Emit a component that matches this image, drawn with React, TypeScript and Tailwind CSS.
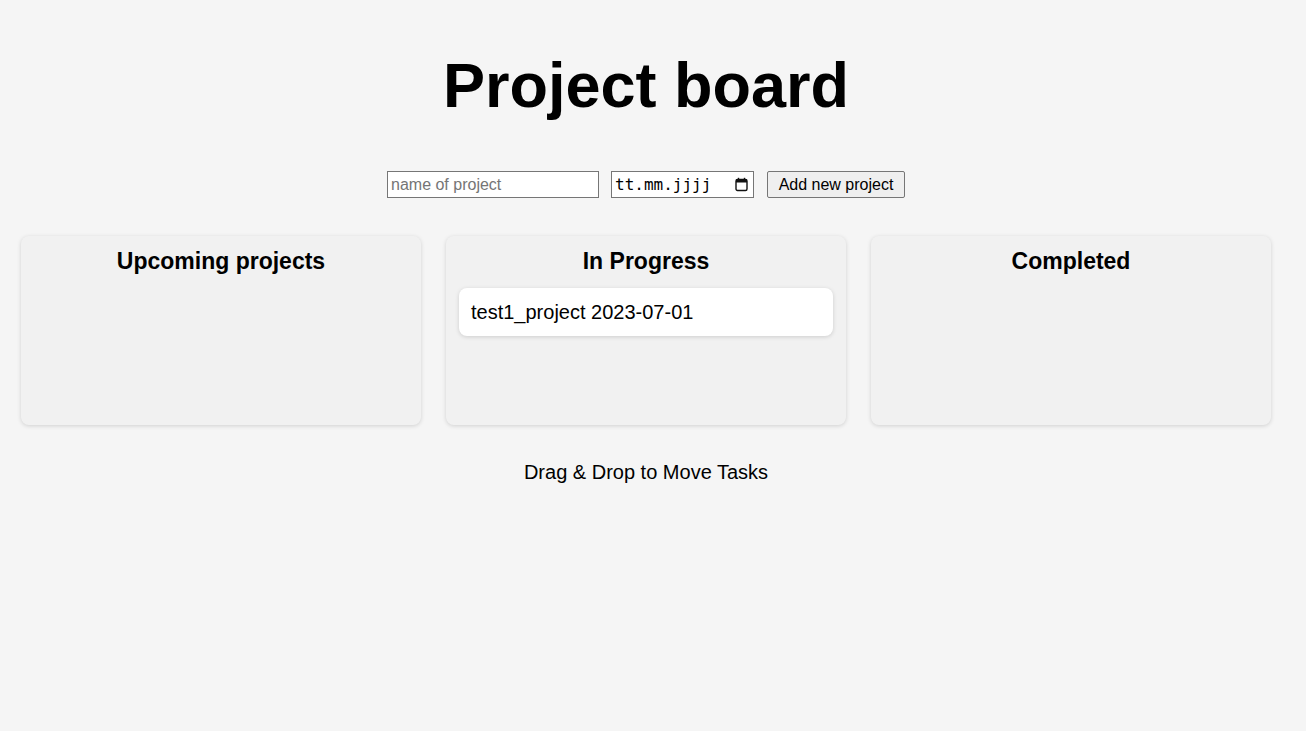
import React, { useState } from 'react';

interface Project {
  id: number;
  name: string;
  date: string;
  status: 'upcoming' | 'progress' | 'completed';
}

const columns: { key: Project['status']; title: string }[] = [
  { key: 'upcoming', title: 'Upcoming projects' },
  { key: 'progress', title: 'In Progress' },
  { key: 'completed', title: 'Completed' },
];

const CalendarIcon: React.FC = () => (
  <svg width="13" height="15" viewBox="0 0 13 15" fill="none" className="shrink-0">
    <rect x="1" y="2.5" width="11" height="11" rx="1.5" stroke="#111" strokeWidth="1.4" />
    <rect x="1" y="2.5" width="11" height="3" fill="#111" />
    <line x1="3.5" y1="0.8" x2="3.5" y2="3" stroke="#111" strokeWidth="1.4" />
    <line x1="9.5" y1="0.8" x2="9.5" y2="3" stroke="#111" strokeWidth="1.4" />
  </svg>
);

const App: React.FC = () => {
  const [projects] = useState<Project[]>([
    { id: 1, name: 'test1_project', date: '2023-07-01', status: 'progress' },
  ]);
  const [name, setName] = useState('');

  return (
    <div className="min-h-[731px] bg-[#f5f5f5] text-black font-['Liberation_Sans',Arial,sans-serif]">
      <div className="w-[1292px]">
        <h1 className="pt-[49px] text-center text-[63px] font-bold leading-[1.15]">Project board</h1>

        <div className="mt-[50px] flex justify-center items-center">
          <input
            type="text"
            value={name}
            onChange={(e) => setName(e.target.value)}
            placeholder="name of project"
            className="w-[212px] h-[27px] border border-[#767676] bg-white px-[3px] text-[16px] placeholder:text-[#757575] outline-none"
          />
          <div className="ml-[12px] w-[143px] h-[27px] border border-[#767676] bg-white flex items-center justify-between pl-[3px] pr-[5px]">
            <span className="font-['DejaVu_Sans_Mono','Liberation_Mono',monospace] text-[16px] text-black">tt.mm.jjjj</span>
            <CalendarIcon />
          </div>
          <button className="ml-[13px] w-[138px] h-[27px] border border-[#767676] rounded-[2px] bg-[#efefef] text-[16px] text-black">
            Add new project
          </button>
        </div>

        <div className="mt-[38px] flex justify-center gap-[25px]">
          {columns.map((col) => (
            <div
              key={col.key}
              className="w-[400px] h-[189px] rounded-[8px] bg-[#f1f1f1] shadow-[0_1px_4px_rgba(0,0,0,0.15)] px-[13px] pt-[12px]"
            >
              <h2 className="text-center text-[23px] font-bold leading-[1.15]">{col.title}</h2>
              <div className="mt-[13px] flex flex-col gap-[10px]">
                {projects
                  .filter((p) => p.status === col.key)
                  .map((p) => (
                    <div
                      key={p.id}
                      className="h-[48px] rounded-[8px] bg-white shadow-[0_1px_4px_rgba(0,0,0,0.15)] px-[12px] flex items-center text-[20px]"
                    >
                      {p.name} {p.date}
                    </div>
                  ))}
              </div>
            </div>
          ))}
        </div>

        <p className="mt-[32px] text-center text-[20px]">Drag &amp; Drop to Move Tasks</p>
      </div>
    </div>
  );
};

export default App;
